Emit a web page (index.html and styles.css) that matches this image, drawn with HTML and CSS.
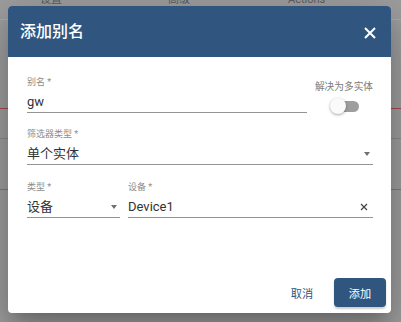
FILE: index.html
```html
<!DOCTYPE html>
<html lang="zh">
<head>
  <meta charset="UTF-8">
  <title>添加别名</title>
  <link rel="stylesheet" href="styles.css">
</head>
<body>
  <div class="page">
    <div class="table-head">
      <span class="col c1">设置</span>
      <span class="col c2">高级</span>
      <span class="col c3">Actions</span>
    </div>
    <div class="table-row r1"></div>
    <div class="table-row r2"></div>
    <div class="table-row r3"></div>
  </div>

  <div class="dialog">
    <div class="dialog-header">
      <h2>添加别名</h2>
      <button class="close">
        <svg width="12" height="12" viewBox="0 0 12 12"><path d="M1 1L11 11M11 1L1 11" stroke="#fff" stroke-width="2" /></svg>
      </button>
    </div>
    <div class="dialog-body">
      <div class="row row-alias">
        <div class="field grow">
          <label>别名 *</label>
          <div class="value">gw</div>
        </div>
        <div class="toggle-col">
          <span class="toggle-label">解决为多实体</span>
          <span class="toggle"><span class="track"></span><span class="thumb"></span></span>
        </div>
      </div>
      <div class="row row-filter">
        <div class="field grow">
          <label>筛选器类型 *</label>
          <div class="value"><span>单个实体</span><span class="arrow"></span></div>
        </div>
      </div>
      <div class="row row-entity">
        <div class="field type">
          <label>类型 *</label>
          <div class="value"><span>设备</span><span class="arrow"></span></div>
        </div>
        <div class="field grow">
          <label>设备 *</label>
          <div class="value">
            <span>Device1</span>
            <svg class="clear" width="8" height="8" viewBox="0 0 8 8"><path d="M1 1L7 7M7 1L1 7" stroke="#444" stroke-width="1.2" /></svg>
          </div>
        </div>
      </div>
    </div>
    <div class="dialog-actions">
      <button class="btn btn-text">取消</button>
      <button class="btn btn-primary">添加</button>
    </div>
  </div>
</body>
</html>
```

FILE: styles.css
```css
* {
  margin: 0;
  padding: 0;
  box-sizing: border-box;
}
body {
  font-family: Roboto, "Noto Sans CJK SC", sans-serif;
  background-color: #9e9e9e;
  width: 401px;
  height: 322px;
  overflow: hidden;
  position: relative;
}
.table-head {
  height: 20px;
  border-bottom: 1px solid #acacac;
  display: flex;
}
.col {
  font-size: 11px;
  line-height: 11px;
  margin-top: -6px;
  color: #5c5c5c;
}
.c1 { margin-left: 40px; width: 128px; }
.c2 { width: 120px; }
.table-row.r1 {
  height: 89px;
  border-bottom: 1px solid #a84848;
}
.table-row.r2 {
  height: 30px;
  border-bottom: 1px solid #8a8a8a;
}
.table-row.r3 {
  height: 51px;
  border-bottom: 1px solid #7c7c7c;
}

.dialog {
  position: absolute;
  left: 8px;
  top: 6px;
  width: 383px;
  height: 307px;
  background: #ffffff;
  border-radius: 4px;
  overflow: hidden;
  display: flex;
  flex-direction: column;
  box-shadow: 0 11px 15px -7px rgba(0, 0, 0, 0.2), 0 24px 38px 3px rgba(0, 0, 0, 0.14), 0 9px 46px 8px rgba(0, 0, 0, 0.12);
}
.dialog-header {
  height: 51px;
  background: #305680;
  color: #ffffff;
  display: flex;
  align-items: center;
  justify-content: space-between;
  padding: 0 15px 0 12px;
}
.dialog-header h2 {
  font-size: 16px;
  font-weight: 500;
  line-height: 20px;
}
.close {
  background: none;
  border: none;
  width: 12px;
  height: 12px;
  margin-top: 2px;
  display: flex;
}

.dialog-body {
  padding: 19px 18px 0 19px;
}
.row {
  display: flex;
  align-items: flex-start;
  gap: 8px;
}
.row-filter { margin-top: 14px; }
.row-entity { margin-top: 16px; }
.field {
  border-bottom: 1px solid #949494;
}
.field.grow { flex: 1; }
.field.type { width: 93px; }
.field label {
  display: block;
  font-size: 9px;
  line-height: 12px;
  color: #8c8c8c;
  margin-bottom: 4px;
}
.value {
  height: 20px;
  line-height: 20px;
  font-size: 13px;
  color: #333333;
  display: flex;
  align-items: center;
  justify-content: space-between;
}
.arrow {
  width: 0;
  height: 0;
  border-left: 3.5px solid transparent;
  border-right: 3.5px solid transparent;
  border-top: 4px solid #707070;
  margin-right: 3px;
}
.clear {
  margin-right: 5px;
}

.toggle-col {
  width: 58px;
  margin-top: 5px;
  display: flex;
  flex-direction: column;
  align-items: center;
}
.toggle-label {
  font-size: 9.7px;
  line-height: 12px;
  color: #7a7a7a;
  white-space: nowrap;
}
.toggle {
  position: relative;
  width: 29px;
  height: 16px;
  margin-top: 5px;
  display: flex;
  align-items: center;
}
.track {
  width: 28px;
  height: 11px;
  border-radius: 6px;
  background: #9e9e9e;
  margin-left: 1px;
}
.thumb {
  position: absolute;
  left: 0;
  top: 0;
  width: 16px;
  height: 16px;
  border-radius: 50%;
  background: #fafafa;
  box-shadow: 0 1px 3px rgba(0, 0, 0, 0.35);
}

.dialog-actions {
  margin-top: auto;
  display: flex;
  justify-content: flex-end;
  gap: 6px;
  padding: 0 5px 6px 0;
}
.btn {
  width: 52px;
  height: 29px;
  border: none;
  border-radius: 4px;
  font-family: Roboto, "Noto Sans CJK SC", sans-serif;
  font-size: 11.2px;
  cursor: pointer;
}
.btn-text {
  background: transparent;
  color: #305680;
}
.btn-primary {
  background: #305680;
  color: #ffffff;
  box-shadow: 0 2px 2px rgba(0, 0, 0, 0.2);
}
```
